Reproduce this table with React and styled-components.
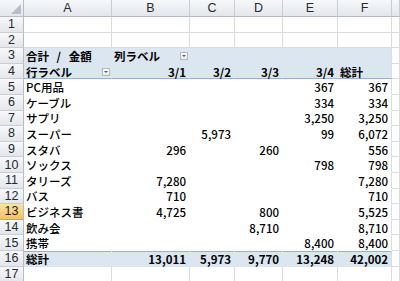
import React from "react";
import styled, { createGlobalStyle, css } from "styled-components";

const GlobalStyle = createGlobalStyle`
  html, body {
    margin: 0;
    padding: 0;
    background: #ffffff;
    overflow: hidden;
  }
  * {
    box-sizing: border-box;
  }
`;

// the last column is only a sliver at the window edge, so its letter never shows
const COLS = ["A", "B", "C", "D", "E", "F", ""];

// pivot rows: label, then the 3/1 .. 3/4 values and the grand total
const items = [
  ["PC用品", "", "", "", "367", "367"],
  ["ケーブル", "", "", "", "334", "334"],
  ["サプリ", "", "", "", "3,250", "3,250"],
  ["スーパー", "", "5,973", "", "99", "6,072"],
  ["スタバ", "296", "", "260", "", "556"],
  ["ソックス", "", "", "", "798", "798"],
  ["タリーズ", "7,280", "", "", "", "7,280"],
  ["バス", "710", "", "", "", "710"],
  ["ビジネス書", "4,725", "", "800", "", "5,525"],
  ["飲み会", "", "", "8,710", "", "8,710"],
  ["携帯", "", "", "", "8,400", "8,400"],
];

const totals = ["総計", "13,011", "5,973", "9,770", "13,248", "42,002"];

const Sheet = styled.div`
  display: grid;
  grid-template-columns: 24px 88px 78px 45px 48px 55px 54px 1fr;
  grid-template-rows: 17px repeat(17, 15.6px);
  width: 400px;
  height: 281px;
  overflow: hidden;
  font-family: "Noto Sans CJK JP", "Noto Sans", sans-serif;
  font-size: 11.5px;
  color: #000;
`;

const headBg = css`
  background: linear-gradient(#f7f8fa, #e3e6eb);
  color: #262a30;
  font-family: "Liberation Sans", Arial, sans-serif;
`;

const Corner = styled.div`
  ${headBg};
  position: relative;
  border-right: 1px solid #b7bcc4;
  border-bottom: 1px solid #b7bcc4;

  &::after {
    content: "";
    position: absolute;
    right: 2px;
    bottom: 2px;
    border-style: solid;
    border-width: 0 0 10px 10px;
    border-color: transparent transparent #b9bec6 transparent;
  }
`;

const ColHead = styled.div`
  ${headBg};
  display: flex;
  align-items: center;
  justify-content: center;
  font-size: 12.5px;
  border-right: 1px solid #c9ced5;
  border-bottom: 1px solid #b7bcc4;
`;

const RowHead = styled.div`
  ${headBg};
  display: flex;
  align-items: center;
  justify-content: center;
  font-size: 12.5px;
  border-right: 1px solid #b7bcc4;
  border-bottom: 1px solid #c9ced5;

  ${(p) =>
    p.$active &&
    css`
      background: linear-gradient(#fbe3a6, #f3c457);
      border-bottom-color: #e0a93a;
      color: #1f1f1f;
    `}
`;

const Cell = styled.div`
  display: flex;
  align-items: center;
  justify-content: ${(p) => (p.$align === "right" ? "flex-end" : "flex-start")};
  padding: 1px 3px 0 2px;
  white-space: pre;
  font-weight: ${(p) => (p.$bold ? 700 : 500)};
  word-spacing: ${(p) => p.$spread || 0}px;
  background: #ffffff;
  border-right: 1px solid ${(p) => (p.$pivot && !p.$edge ? "transparent" : "#dadcdd")};
  border-bottom: 1px solid ${(p) => (p.$pivot ? "transparent" : "#dadcdd")};

  ${(p) =>
    p.$band &&
    css`
      background: #dce6f1;
    `}
  ${(p) =>
    p.$underline &&
    css`
      border-bottom-color: #95b3d7;
    `}
  ${(p) =>
    p.$overline &&
    css`
      box-shadow: inset 0 1px 0 #95b3d7;
    `}
`;

const DropButton = styled.span`
  margin-left: auto;
  margin-right: -2px;
  width: 8px;
  height: 8px;
  display: flex;
  align-items: center;
  justify-content: center;
  background: linear-gradient(#ffffff, #e9ecf0);
  border: 1px solid #b3b8c0;

  &::after {
    content: "";
    border-style: solid;
    border-width: 2px 2px 0 2px;
    border-color: #505860 transparent transparent transparent;
  }
`;

function PlainRow({ n }) {
  return (
    <>
      <RowHead>{n}</RowHead>
      {COLS.map((c, i) => (
        <Cell key={i} />
      ))}
    </>
  );
}

export default function App() {
  return (
    <>
      <GlobalStyle />
      <Sheet>
        <Corner />
        {COLS.map((c, i) => (
          <ColHead key={i}>{c}</ColHead>
        ))}

        <PlainRow n={1} />
        <PlainRow n={2} />

        <RowHead>3</RowHead>
        <Cell $pivot $band $bold $spread={5}>合計 / 金額</Cell>
        <Cell $pivot $band $bold>
          列ラベル
          <DropButton />
        </Cell>
        <Cell $pivot $band />
        <Cell $pivot $band />
        <Cell $pivot $band />
        <Cell $pivot $band $edge />
        <Cell />

        <RowHead>4</RowHead>
        <Cell $pivot $band $bold $underline>
          行ラベル
          <DropButton />
        </Cell>
        {["3/1", "3/2", "3/3", "3/4"].map((d) => (
          <Cell key={d} $pivot $band $bold $underline $align="right">
            {d}
          </Cell>
        ))}
        <Cell $pivot $band $bold $underline $edge>
          総計
        </Cell>
        <Cell />

        {items.map((row, i) => (
          <React.Fragment key={row[0]}>
            <RowHead $active={i + 5 === 13}>{i + 5}</RowHead>
            {row.map((v, j) => (
              <Cell key={j} $pivot $edge={j === 5} $align={j === 0 ? "left" : "right"}>
                {v}
              </Cell>
            ))}
            <Cell />
          </React.Fragment>
        ))}

        <RowHead>16</RowHead>
        {totals.map((v, j) => (
          <Cell key={j} $pivot $band $bold $overline $edge={j === 5} $align={j === 0 ? "left" : "right"}>
            {v}
          </Cell>
        ))}
        <Cell />

        <PlainRow n={17} />
      </Sheet>
    </>
  );
}
